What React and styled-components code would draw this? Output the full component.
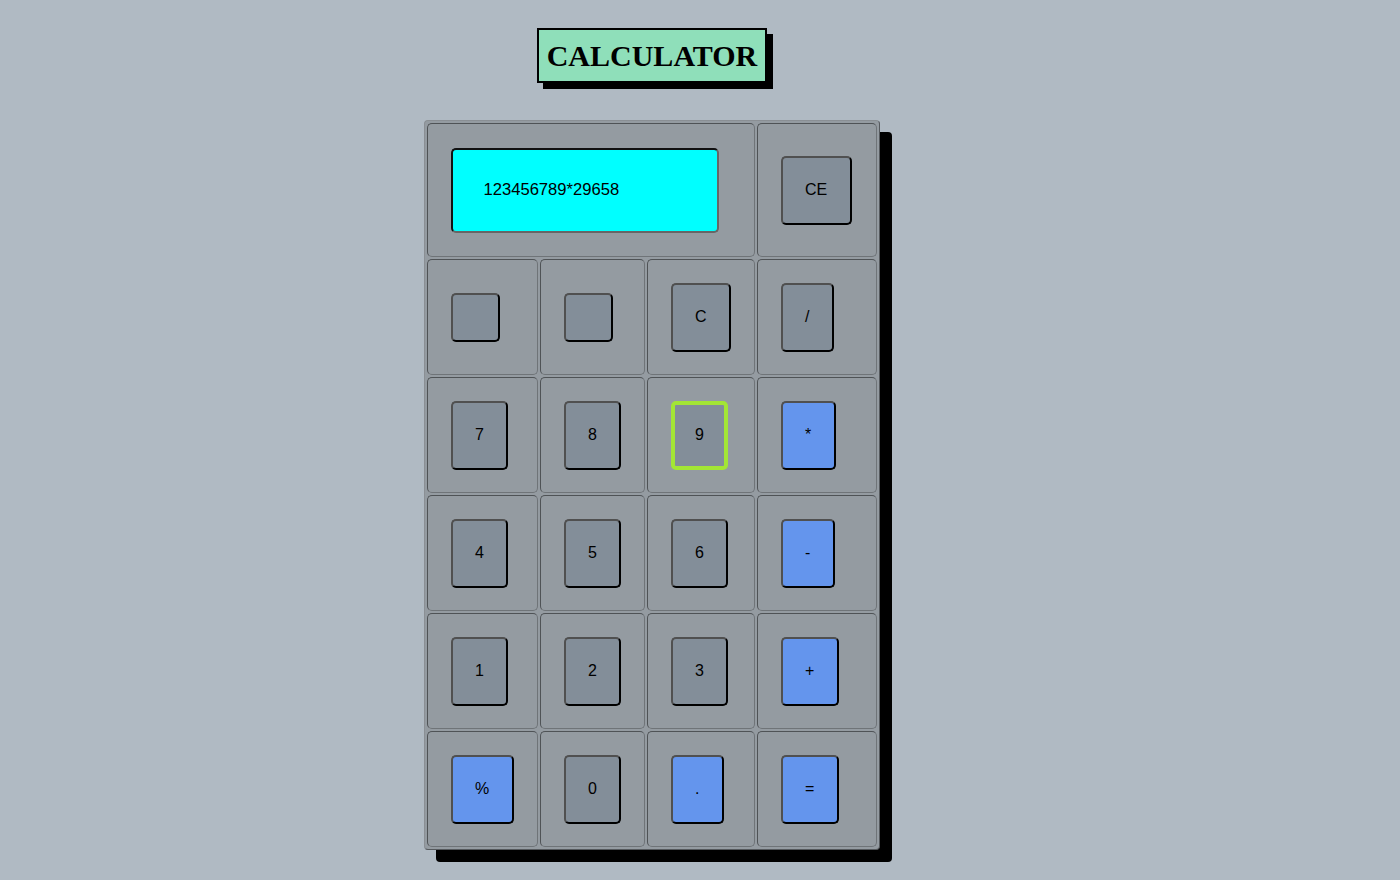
import React from "react";
import styled, { createGlobalStyle } from "styled-components";

const GlobalStyle = createGlobalStyle`
  html, body {
    margin: 0;
    padding: 0;
    background-color: #b0bac3;
  }
  body {
    font-family: "Liberation Sans", Arial, sans-serif;
  }
`;

const Page = styled.div`
  min-height: 880px;
  display: flex;
  flex-direction: column;
  align-items: center;
  padding: 28px 96px 0 0;
  box-sizing: border-box;
`;

const Title = styled.h1`
  margin: 0 0 37px;
  padding: 9px 8px;
  background-color: #8fdfba;
  border: 2px solid #000;
  box-shadow: 6px 6px 0 #000;
  font-family: "Liberation Serif", "Times New Roman", serif;
  font-size: 30px;
  font-weight: 700;
  line-height: 33px;
  color: #000;
`;

const Calculator = styled.div`
  display: grid;
  grid-template-columns: 111px 105px 108px 120px;
  gap: 2px;
  padding: 2px;
  margin-left: -1px;
  background-color: #949ba1;
  border: 1px solid;
  border-color: #8a8f94 #55595d #55595d #8a8f94;
  border-radius: 4px;
  box-shadow: 12px 12px 0 #000;
`;

const Cell = styled.div`
  grid-column: span ${(props) => props.span || 1};
  display: flex;
  align-items: center;
  padding: 0 0 0 23px;
  min-height: 116px;
  box-sizing: border-box;
  background-color: #949ba1;
  border: 1px solid;
  border-color: #4f5356 #6f7478 #6f7478 #4f5356;
  border-radius: 5px;
`;

const Display = styled.div`
  width: 268px;
  height: 85px;
  box-sizing: border-box;
  display: flex;
  align-items: center;
  padding-left: 31px;
  margin: 23.5px 0;
  background-color: #00ffff;
  border: 2px solid;
  border-color: #111 #666 #666 #111;
  border-radius: 5px;
  font-size: 16.6px;
  color: #000;
`;

const Key = styled.button`
  display: block;
  padding: ${(props) => (props.active ? "20.5px" : "22.5px")};
  background-color: ${(props) => (props.op ? "#6495ed" : "#838e99")};
  border: ${(props) => (props.active ? "4px" : "2px")} solid;
  border-color: ${(props) =>
    props.active ? "#a3e635" : "#505050 #000 #000 #505050"};
  border-radius: 5px;
  font-family: "Liberation Sans", Arial, sans-serif;
  font-size: 16px;
  line-height: 20px;
  color: #000;
  cursor: pointer;
`;

const rows = [
  [{ label: "" }, { label: "" }, { label: "C" }, { label: "/" }],
  [{ label: "7" }, { label: "8" }, { label: "9", active: true }, { label: "*", op: true }],
  [{ label: "4" }, { label: "5" }, { label: "6" }, { label: "-", op: true }],
  [{ label: "1" }, { label: "2" }, { label: "3" }, { label: "+", op: true }],
  [{ label: "%", op: true }, { label: "0" }, { label: ".", op: true }, { label: "=", op: true }],
];

const App = () => {
  return (
    <>
      <GlobalStyle />
      <Page>
        <Title>CALCULATOR</Title>
        <Calculator>
          <Cell span={3}>
            <Display>123456789*29658</Display>
          </Cell>
          <Cell>
            <Key>CE</Key>
          </Cell>
          {rows.map((row, i) =>
            row.map((key, j) => (
              <Cell key={`${i}-${j}`}>
                <Key op={key.op} active={key.active}>
                  {key.label}
                </Key>
              </Cell>
            ))
          )}
        </Calculator>
      </Page>
    </>
  );
};

export default App;
